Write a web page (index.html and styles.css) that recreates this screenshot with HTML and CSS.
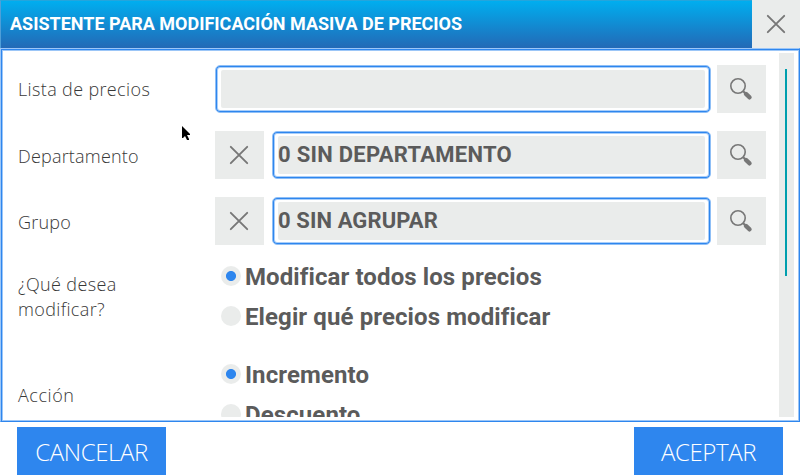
FILE: index.html
```html
<!DOCTYPE html>
<html lang="es">
<head>
<meta charset="utf-8">
<title>Asistente para modificación masiva de precios</title>
<link rel="stylesheet" href="styles.css">
</head>
<body>
<svg class="defs" width="0" height="0" aria-hidden="true">
  <symbol id="cross" viewBox="0 0 48 48"><path d="M15.8 15.8L32.2 32.2M32.2 15.8L15.8 32.2" fill="none" stroke="#777" stroke-width="1.9" stroke-linecap="round"/></symbol>
  <symbol id="lens" viewBox="0 0 49 48"><circle cx="21" cy="21" r="7.2" fill="none" stroke="#777" stroke-width="1.6"/><path d="M26.2 26.2L29 29" stroke="#777" stroke-width="2"/><path d="M28.9 28.9L32.6 32.4" stroke="#777" stroke-width="4.2" stroke-linecap="round"/></symbol>
</svg>
<header class="title-bar">
  <h1 class="title"><span class="title-text">ASISTENTE PARA MODIFICACIÓN MASIVA DE PRECIOS</span></h1>
  <button class="close"><svg width="48" height="48"><use href="#cross"/></svg></button>
</header>
<main class="panel">
  <div class="form">
    <div class="row">
      <span class="label">Lista de precios</span>
      <div class="field"><div class="value"></div></div>
      <button class="tool"><svg width="49" height="48"><use href="#lens"/></svg></button>
    </div>
    <div class="row">
      <span class="label lower">Departamento</span>
      <button class="tool clear"><svg width="48" height="48"><use href="#cross"/></svg></button>
      <div class="field"><div class="value wide">0 SIN DEPARTAMENTO</div></div>
      <button class="tool"><svg width="49" height="48"><use href="#lens"/></svg></button>
    </div>
    <div class="row">
      <span class="label lower">Grupo</span>
      <button class="tool clear"><svg width="48" height="48"><use href="#cross"/></svg></button>
      <div class="field"><div class="value">0 SIN AGRUPAR</div></div>
      <button class="tool"><svg width="49" height="48"><use href="#lens"/></svg></button>
    </div>
    <div class="choice">
      <span class="label">¿Qué desea<br>modificar?</span>
      <div class="options">
        <div class="option"><i class="radio on"></i><span>Modificar todos los precios</span></div>
        <div class="option"><i class="radio"></i><span>Elegir qué precios modificar</span></div>
      </div>
    </div>
    <div class="choice action">
      <span class="label">Acción</span>
      <div class="options">
        <div class="option"><i class="radio on"></i><span>Incremento</span></div>
        <div class="option"><i class="radio"></i><span>Descuento</span></div>
      </div>
    </div>
  </div>
  <div class="scrollbar"><div class="thumb"></div></div>
</main>
<footer class="footer">
  <button class="btn">CANCELAR</button>
  <button class="btn">ACEPTAR</button>
</footer>
<svg class="cursor" width="9" height="15" viewBox="0 0 9 15" aria-hidden="true"><path d="M0 0L8 8V9H5L7 13V14H5L3 10L1 12H0Z" fill="#000"/></svg>
</body>
</html>
```
FILE: styles.css
```css
* { box-sizing: border-box; }
body { margin: 0; width: 800px; height: 475px; overflow: hidden; background: #fff; color: #5b5b5b; display: flex; flex-direction: column; }
.defs { position: absolute; }
button { border: 0; padding: 0; font: inherit; color: inherit; background: #eaeceb; display: block; }
svg { display: block; }

.title-bar { display: flex; height: 48px; flex: none; }
.title { margin: 0; flex: 1; padding-left: 9px; display: flex; align-items: center; background: linear-gradient(#00aeef, #2369b6); border-left: 1px solid #4f9fd8; border-top: 1px solid #25a5dc; color: #fff; font: 700 18px/46px Roboto, sans-serif; white-space: nowrap; }
.title-text { padding-bottom: 1px; }
.close { width: 48px; height: 48px; }

.panel { height: 374px; flex: none; display: flex; justify-content: space-between; padding: 4px 5px 4px 16px; border: 1px solid #2e86ee; border-color: #9cc6f7 #2e86ee #2e86ee #9cc6f7; box-shadow: inset 1px 1px #2e86ee, inset 2px 2px #9cc6f7, inset -1px -1px #9cc6f7; }
.form { width: 749px; height: 364px; overflow: hidden; padding-top: 12px; }
.row { display: flex; height: 48px; margin-bottom: 18px; }
.label { width: 198px; flex: none; padding: 1px 0 0 1px; font: 300 18px/25px "Open Sans", sans-serif; letter-spacing: .36px; color: #383838; align-self: center; white-space: nowrap; }
.lower { padding-top: 3px; letter-spacing: .2px; }
.tool { width: 49px; height: 48px; flex: none; }
.clear { margin-right: 8px; }
.field { flex: 1; margin-right: 6px; border: 1px solid #8fbff6; border-radius: 5px; padding: 4px 5px; box-shadow: inset 0 0 0 1px #2e86ee, inset 0 0 0 2px #a9cef9; }
.value { height: 38px; background: #eaeceb; border-radius: 2px; font: 700 22px/38px Roboto, sans-serif; letter-spacing: .1px; white-space: nowrap; }
.wide { letter-spacing: .28px; }
.choice { display: flex; height: 98px; align-items: flex-start; }
.choice .label { align-self: flex-start; padding-top: 9px; }
.options { padding: 3px 0 0 6px; margin-top: -10px; }
.option { display: flex; align-items: center; height: 40px; gap: 4px; font: 700 24px/40px Roboto, sans-serif; letter-spacing: .1px; white-space: nowrap; }
.option span { padding-top: 1px; }
.radio { width: 20px; height: 20px; border-radius: 50%; background: #eaeceb; flex: none; }
.radio.on { background: radial-gradient(circle, #2e86ee 4.6px, #eaeceb 5.4px); }
.action .label { padding-top: 22px; letter-spacing: .55px; }
.scrollbar { width: 15px; height: 364px; background: #eaeceb; padding: 16px 7px 0 6px; }
.thumb { width: 2px; height: 207px; background: #009fae; }

.footer { display: flex; justify-content: space-between; padding: 5px 17px 0; flex: none; }
.btn { width: 149px; height: 48px; background: #2e86ee; color: #fff; font: 300 24px/50px "Open Sans", sans-serif; letter-spacing: -.4px; }
.cursor { position: absolute; left: 182px; top: 126px; }
```
